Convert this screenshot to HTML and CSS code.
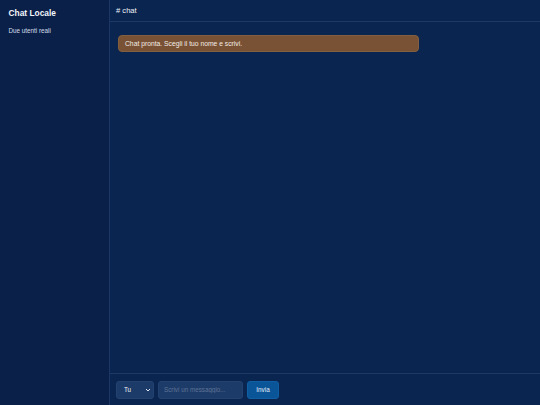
FILE: index.html
```html
<!DOCTYPE html>
<html lang="it">
<head>
<meta charset="utf-8">
<title>Chat Locale</title>
<link rel="stylesheet" href="styles.css">
</head>
<body>
<div class="app">
  <aside class="sidebar">
    <h1 class="title">Chat Locale</h1>
    <p class="subtitle">Due utenti reali</p>
  </aside>
  <main class="main">
    <header class="header"># chat</header>
    <section class="messages">
      <div class="bubble">Chat pronta. Scegli il tuo nome e scrivi.</div>
    </section>
    <footer class="composer">
      <div class="select-wrap">
        <div class="who">Tu</div>
        <svg class="chev" width="6" height="4" viewBox="0 0 6 4"><path d="M1 1l2 2 2-2" fill="none" stroke="#dfe6f2" stroke-width="1"/></svg>
      </div>
      <input class="text" type="text" placeholder="Scrivi un messaggio...">
      <button class="send">Invia</button>
    </footer>
  </main>
</div>
</body>
</html>
```

FILE: styles.css
```css
* { box-sizing: border-box; }
html, body {
  margin: 0;
  height: 100%;
  background: #0a2550;
  font-family: "Liberation Sans", Arial, sans-serif;
  color: #e8edf5;
}
.app {
  display: flex;
  height: 405px;
}
.sidebar {
  width: 110px;
  flex: none;
  background: #0a2049;
  border-right: 1px solid #1b3763;
  padding: 8px 8.5px;
}
.title {
  margin: 0;
  font-size: 8.4px;
  line-height: 10px;
  font-weight: bold;
  color: #f2f5fa;
}
.subtitle {
  margin: 9px 0 0;
  font-size: 6.3px;
  line-height: 8px;
  color: #d6deea;
}
.main {
  flex: 1;
  display: flex;
  flex-direction: column;
  min-width: 0;
}
.header {
  height: 22px;
  flex: none;
  border-bottom: 1px solid #1d3a67;
  padding: 0 6px;
  font-size: 7.6px;
  line-height: 21px;
  color: #f0f3f8;
}
.messages {
  flex: 1;
  padding: 13px 8px;
}
.bubble {
  max-width: 301px;
  background: #795235;
  border: 1px solid #82603f;
  border-radius: 4px;
  padding: 3.5px 6px;
  font-size: 6.75px;
  line-height: 8px;
  color: #f3ece6;
}
.composer {
  flex: none;
  height: 32px;
  border-top: 1px solid #1d3a67;
  display: flex;
  align-items: center;
  gap: 4px;
  padding: 0 6px;
}
.select-wrap {
  position: relative;
  width: 38px;
  height: 18px;
}
.who {
  width: 100%;
  height: 100%;
  background: #1d3b68;
  border: 1px solid #24426f;
  border-radius: 3px;
  color: #eef2f8;
  font-size: 6.3px;
  line-height: 16px;
  padding: 0 7px;
}
.chev {
  position: absolute;
  right: 3px;
  top: 7px;
  pointer-events: none;
}
.text {
  width: 85px;
  height: 18px;
  background: #1d3b68;
  border: 1px solid #24426f;
  border-radius: 3px;
  color: #eef2f8;
  font-family: "Liberation Sans", Arial, sans-serif;
  font-size: 6.3px;
  padding: 0 5px;
  outline: none;
}
.text::placeholder { color: #5d7396; }
.send {
  width: 32px;
  height: 18px;
  background: #0a5598;
  border: 1px solid #0f5fa5;
  border-radius: 3px;
  color: #e6eef8;
  font-family: "Liberation Sans", Arial, sans-serif;
  font-size: 6.3px;
  padding: 0;
}
```
